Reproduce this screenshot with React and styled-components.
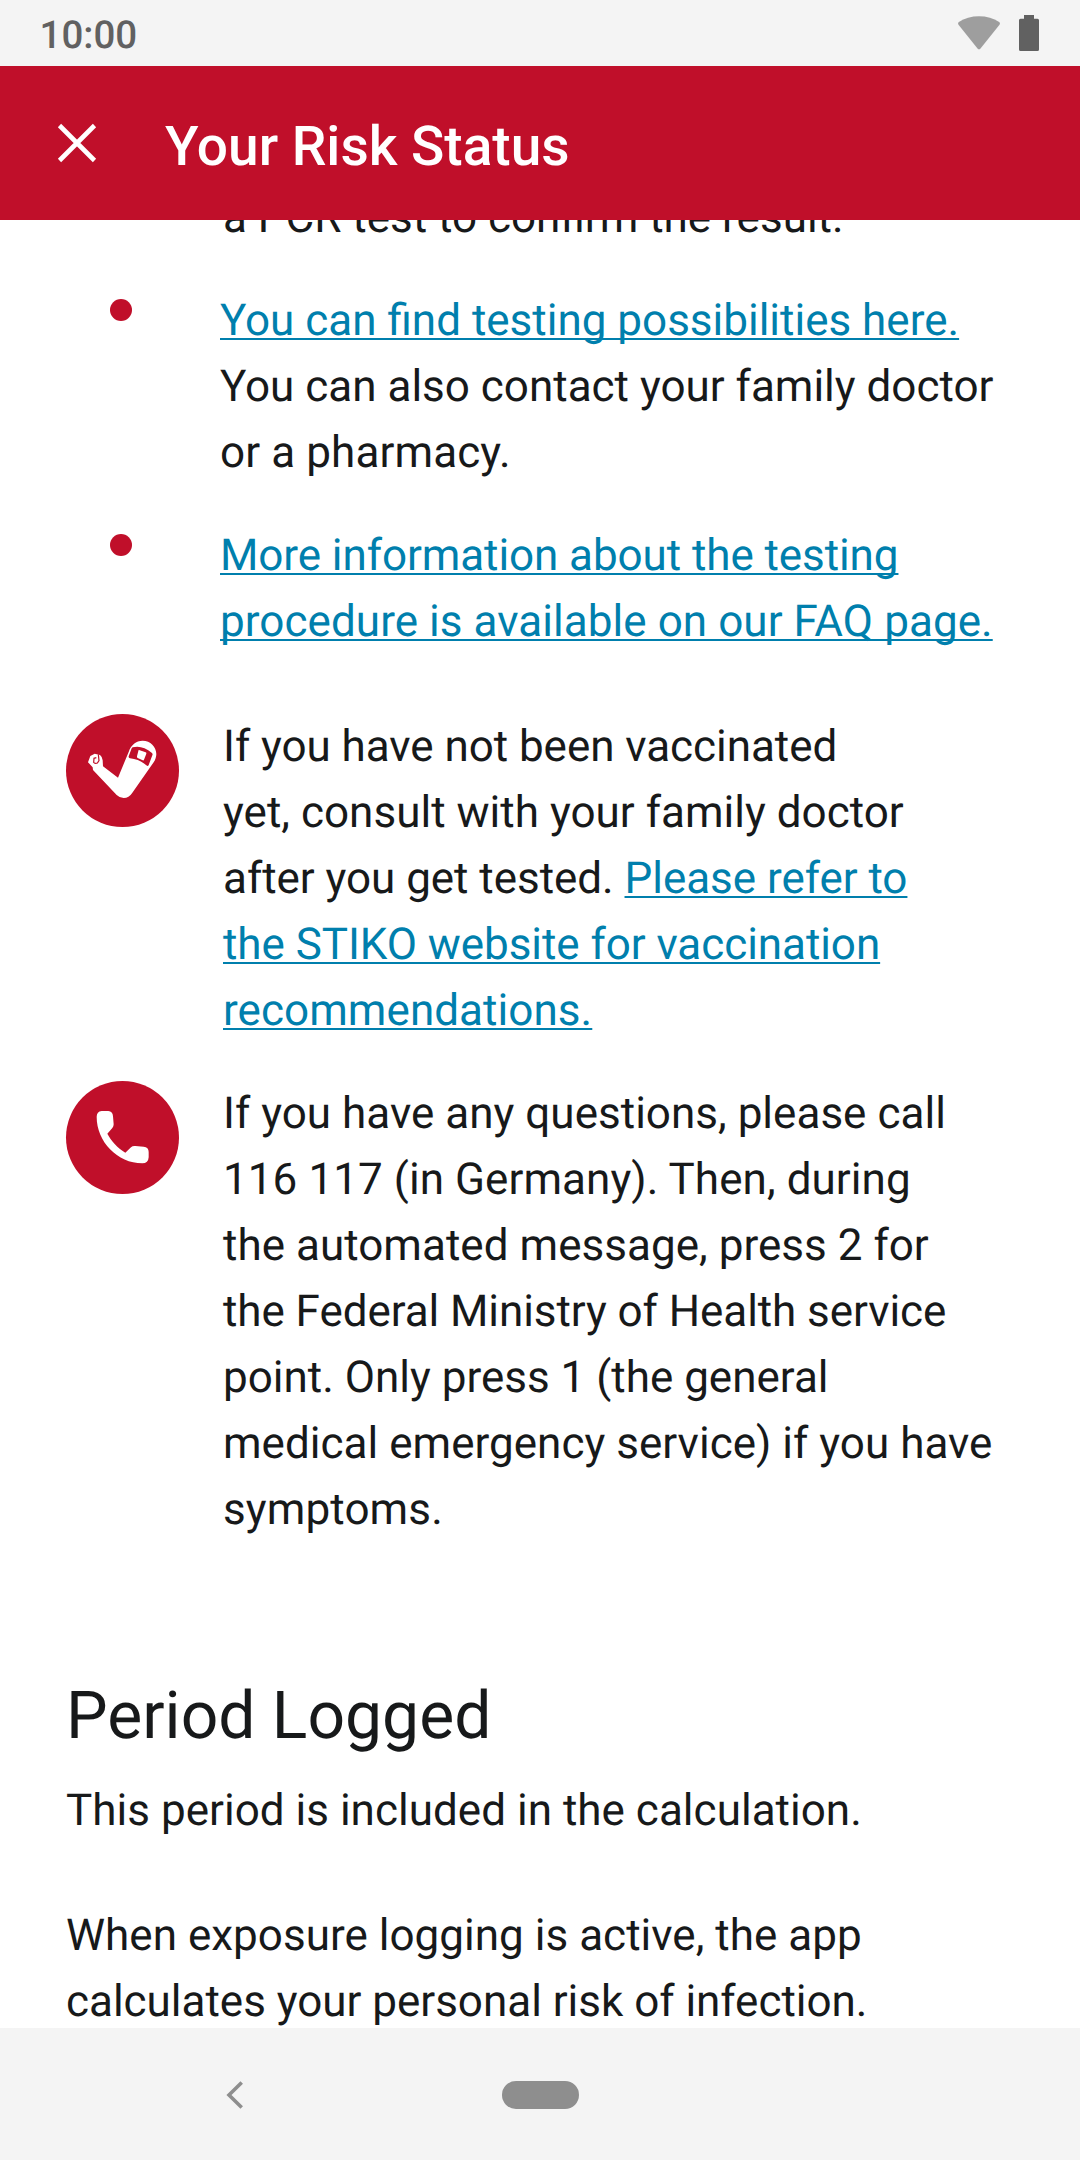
import React from "react";
import styled, { createGlobalStyle } from "styled-components";

const RED = "#c00f2a";
const INK = "#17191a";
const LINK = "#007fad";
const BAR = "#f4f4f4";

const GlobalStyle = createGlobalStyle`
  body {
    margin: 0;
    background: #fff;
    font-family: Roboto, "Noto Sans", sans-serif;
    text-rendering: geometricPrecision;
  }
`;

const Screen = styled.div`
  display: flex;
  flex-direction: column;
  width: 1080px;
  height: 2160px;
  overflow: hidden;
  background: #fff;
  color: ${INK};
`;

const StatusBar = styled.div`
  flex: none;
  box-sizing: border-box;
  display: flex;
  align-items: center;
  justify-content: space-between;
  height: 66px;
  padding: 0 41px 0 39.5px;
  background: ${BAR};
`;

const Clock = styled.span`
  color: #616161;
  font-size: 38.5px;
  font-weight: 500;
  line-height: 66px;
  padding-top: 5px;
`;

const StatusIcons = styled.div`
  display: flex;
  align-items: center;
  gap: 19px;
`;

const Toolbar = styled.header`
  flex: none;
  box-sizing: border-box;
  display: flex;
  align-items: center;
  gap: 68px;
  height: 154px;
  padding: 0 57px;
  background: ${RED};
  color: #fff;
`;

const Title = styled.h1`
  margin: 7px 0 0;
  font-size: 55px;
  font-weight: 500;
  line-height: 66px;
`;

const Content = styled.main`
  flex: 1;
  min-height: 0;
  overflow: hidden;
  padding: 0 66px;
`;

const Text = styled.p`
  margin: 0;
  font-size: 44px;
  line-height: 66px;
`;

const Line = styled.span`
  display: block;
  white-space: pre;
  letter-spacing: ${(p) => (p.$track ? `${p.$track}px` : "normal")};
`;

const Link = styled.a`
  color: ${LINK};
  text-decoration: underline;
  text-decoration-skip-ink: none;
  text-decoration-thickness: 2.2px;
  text-underline-offset: 3.4px;
`;

const ScrolledText = styled(Text)`
  margin: -36px 0 37px 157px;
`;

const BulletList = styled.ul`
  display: flex;
  flex-direction: column;
  gap: 37px;
  margin: 0;
  padding: 0;
  list-style: none;
`;

const BulletItem = styled.li`
  display: flex;
  gap: 88px;
  padding-left: 44px;
`;

const Bullet = styled.span`
  flex: none;
  width: 22px;
  height: 22px;
  margin-top: 12px;
  border-radius: 50%;
  background: ${RED};
`;

const Advice = styled.section`
  display: flex;
  align-items: flex-start;
  gap: 44px;
  margin-top: ${(p) => p.$top}px;
`;

const Badge = styled.div`
  flex: none;
  width: 113px;
  height: 113px;
  margin-top: 1px;
  border-radius: 50%;
  background: ${RED};
`;

const SectionTitle = styled.h2`
  margin: 130px 0 0;
  font-size: 66px;
  font-weight: 400;
  line-height: 90px;
`;

const SectionText = styled(Text)`
  margin-top: ${(p) => p.$top}px;
`;

const NavBar = styled.nav`
  flex: none;
  box-sizing: border-box;
  display: flex;
  align-items: center;
  gap: 258px;
  height: 132px;
  padding: 1px 0 0 226px;
  background: ${BAR};
`;

const HomePill = styled.span`
  width: 77px;
  height: 28px;
  border-radius: 14px;
  background: #8e8e8e;
`;

const WifiIcon = () => (
  <svg width="42" height="34" viewBox="0 0 42 34">
    <path
      d="M.8 6.1C6.500 2.200 13.500.200 21 .200S35.500 2.200 41.200 6.100Q42.500 7.300 41.500 8.700L22.500 32.400Q21 34.200 19.500 32.400L.5 8.700Q-.5 7.300.8 6.100Z"
      fill="#9e9e9e"
    />
  </svg>
);

const BatteryIcon = () => (
  <svg width="20" height="36" viewBox="0 0 20 36">
    <path
      d="M5 0H15V3.800H18.500Q20 3.800 20 5.300V34.500Q20 36 18.500 36H1.500Q0 36 0 34.500V5.300Q0 3.800 1.500 3.800H5Z"
      fill="#616161"
    />
  </svg>
);

const CloseIcon = () => (
  <svg width="40" height="40" viewBox="0 0 40 40">
    <path d="M2.500 2.500L37.500 37.500M37.500 2.500L2.500 37.500" stroke="#fff" strokeWidth="4.600" />
  </svg>
);

const BackIcon = () => (
  <svg width="18" height="28" viewBox="0 0 18 28">
    <path d="M15.700 1.500L3 14L15.700 26.500" fill="none" stroke="#8e8e8e" strokeWidth="3.600" />
  </svg>
);

const ArmIcon = () => (
  <svg width="113" height="113" viewBox="48 42 339 339">
    <path
      d="M114 187L121 168L134 161L150 165Q156 169 158 181L159 199L204 233L236 156C243 135 258 122 278 122C301 122 319 141 319 162C319 170 316 180 311 187L246 280Q237 294 221 294Q209 294 200 285L129 210L128 202Z"
      fill="#fff"
    />
    <path
      d="M139 173L132 175L131 187Q136 192 142 189L147 182L145 163"
      fill="none"
      stroke={RED}
      strokeWidth="3.600"
    />
    <path
      d="M248 142Q276 134 306 159Q309 162 307 166L296 195Q294 200 289 196Q268 178 240 175Q235 174 236 169L245 145Q246 143 248 142Z"
      fill={RED}
    />
    <path d="M267 150L287 157Q290 158 289 161L282 179Q281 182 278 181L263 174Q260 173 261 169L265 153Q265 150 267 150Z" fill="#fff" />
  </svg>
);

const PhoneIcon = () => (
  <svg width="113" height="113" viewBox="48 33 339 339">
    <path
      d="M155 123H175Q188 124 189 139L191 163Q191 169 187 174L172 191C183 212 202 233 226 248L243 232Q248 227 256 228L281 230Q296 231 296 246V262Q295 280 277 280C202 279 140 215 140 140Q140 125 155 123Z"
      fill="#fff"
    />
  </svg>
);

export default function App() {
  return (
    <Screen>
      <GlobalStyle />
      <StatusBar>
        <Clock>10:00</Clock>
        <StatusIcons>
          <WifiIcon />
          <BatteryIcon />
        </StatusIcons>
      </StatusBar>

      <Toolbar>
        <CloseIcon />
        <Title>Your Risk Status</Title>
      </Toolbar>

      <Content>
        <ScrolledText>
          <Line>a PCR test to confirm the result.</Line>
        </ScrolledText>

        <BulletList>
          <BulletItem>
            <Bullet />
            <Text>
              <Line>
                <Link>You can find testing possibilities here.</Link>
              </Line>
              <Line>You can also contact your family doctor</Line>
              <Line $track={0.1}>or a pharmacy.</Line>
            </Text>
          </BulletItem>
          <BulletItem>
            <Bullet />
            <Text>
              <Line $track={-0.08}>
                <Link>More information about the testing</Link>
              </Line>
              <Line $track={0.06}>
                <Link>procedure is available on our FAQ page.</Link>
              </Line>
            </Text>
          </BulletItem>
        </BulletList>

        <Advice $top={59}>
          <Badge>
            <ArmIcon />
          </Badge>
          <Text>
            <Line $track={-0.05}>If you have not been vaccinated</Line>
            <Line $track={0.02}>yet, consult with your family doctor</Line>
            <Line $track={-0.04}>
              after you get tested. <Link>Please refer to</Link>
            </Line>
            <Line $track={-0.06}>
              <Link>the STIKO website for vaccination</Link>
            </Line>
            <Line $track={0.06}>
              <Link>recommendations.</Link>
            </Line>
          </Text>
        </Advice>

        <Advice $top={37}>
          <Badge>
            <PhoneIcon />
          </Badge>
          <Text>
            <Line $track={0.02}>If you have any questions, please call</Line>
            <Line $track={0.07}>116 117 (in Germany). Then, during</Line>
            <Line $track={0.03}>the automated message, press 2 for</Line>
            <Line $track={-0.07}>the Federal Ministry of Health service</Line>
            <Line>point. Only press 1 (the general</Line>
            <Line $track={0.02}>medical emergency service) if you have</Line>
            <Line $track={0.12}>symptoms.</Line>
          </Text>
        </Advice>

        <SectionTitle>Period Logged</SectionTitle>
        <SectionText $top={15}>
          <Line $track={0.02}>This period is included in the calculation.</Line>
        </SectionText>
        <SectionText $top={59}>
          <Line $track={0.02}>When exposure logging is active, the app</Line>
          <Line $track={-0.02}>calculates your personal risk of infection.</Line>
        </SectionText>
      </Content>

      <NavBar>
        <BackIcon />
        <HomePill />
      </NavBar>
    </Screen>
  );
}
